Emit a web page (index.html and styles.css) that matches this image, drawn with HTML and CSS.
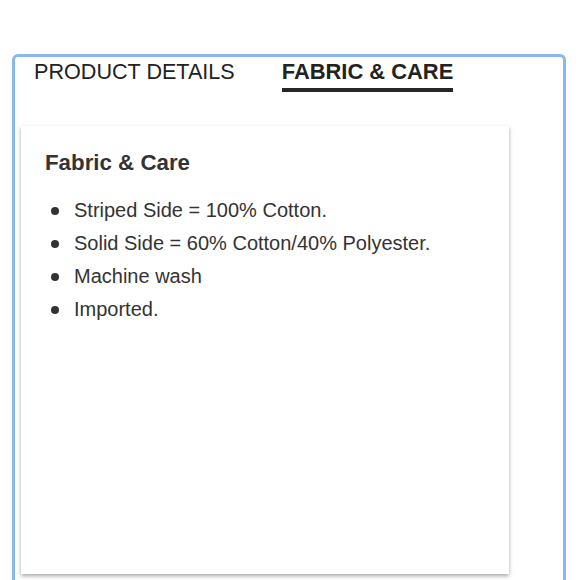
FILE: index.html
```html
<!DOCTYPE html>
<html lang="en">
<head>
<meta charset="utf-8">
<title>Fabric &amp; Care</title>
<link rel="stylesheet" href="styles.css">
</head>
<body>
<div class="panel">
  <div class="tabs">
    <div class="tab">PRODUCT DETAILS</div>
    <div class="tab active">FABRIC &amp; CARE</div>
  </div>
  <div class="card">
    <h2 class="card-title">Fabric &amp; Care</h2>
    <ul class="care-list">
      <li>Striped Side = 100% Cotton.</li>
      <li>Solid Side = 60% Cotton/40% Polyester.</li>
      <li>Machine wash</li>
      <li>Imported.</li>
    </ul>
  </div>
</div>
</body>
</html>
```
FILE: styles.css
```css
html, body {
  margin: 0;
  padding: 0;
  background: #fff;
}
body {
  font-family: "Liberation Sans", Arial, sans-serif;
  color: #333;
  overflow: hidden;
  height: 580px;
}
.panel {
  margin: 54px 14px 0 12px;
  border: 3px solid #88b8ef;
  border-bottom: none;
  border-radius: 6px 6px 0 0;
  height: 526px;
  box-sizing: border-box;
  overflow: hidden;
}
.tabs {
  display: flex;
  gap: 47px;
  padding: 3px 0 0 19px;
}
.tab {
  font-size: 21.6px;
  line-height: 24px;
  color: #222;
  padding-bottom: 4px;
  border-bottom: 4px solid transparent;
}
.tab.active {
  font-weight: bold;
  font-size: 21.9px;
  border-bottom-color: #262626;
}
.card {
  margin: 34px 0 0 6px;
  width: 488px;
  height: 448px;
  box-sizing: border-box;
  padding: 24px 24px 0 24px;
  background: #fff;
  box-shadow: 0 2px 4px rgba(0, 0, 0, 0.35);
}
.card-title {
  margin: 0;
  font-size: 22.3px;
  line-height: 26px;
  font-weight: bold;
  color: #333;
}
.care-list {
  list-style: none;
  margin: 18px 0 0 0;
  padding: 0 0 0 6px;
}
.care-list li {
  display: flex;
  align-items: center;
  font-size: 20px;
  line-height: 33px;
  color: #333;
}
.care-list li::before {
  content: "";
  flex: none;
  width: 8px;
  height: 8px;
  border-radius: 50%;
  background: #333;
  margin-right: 15px;
}
```
